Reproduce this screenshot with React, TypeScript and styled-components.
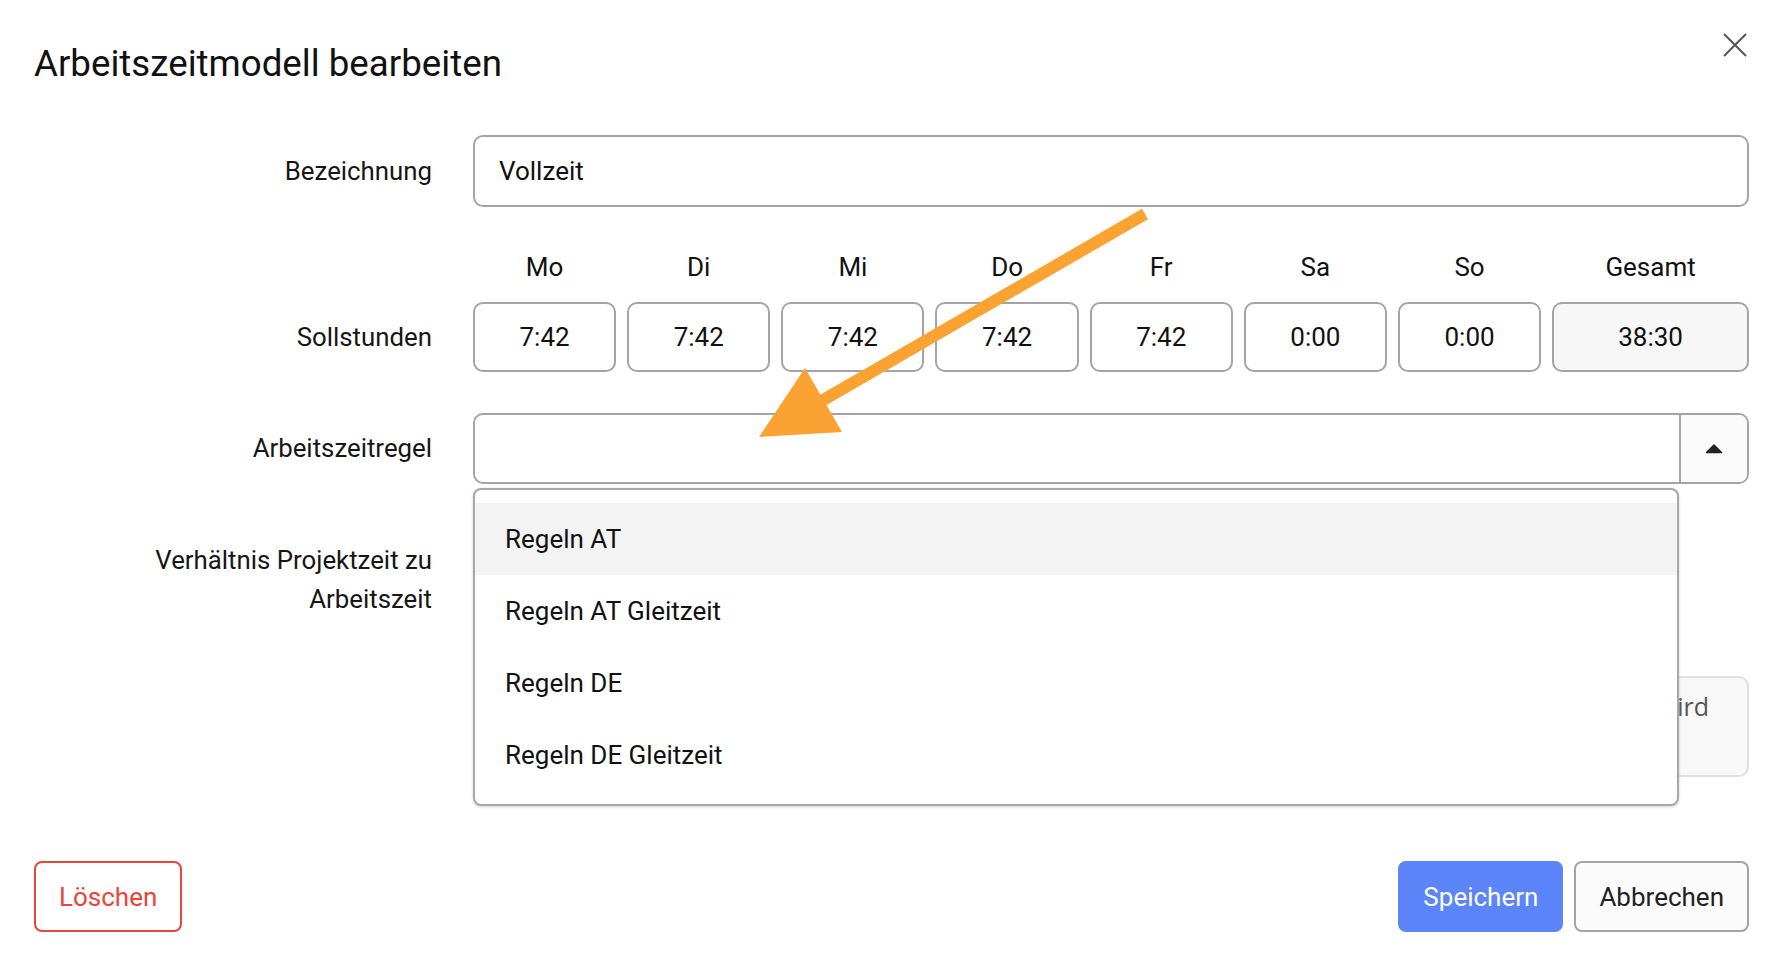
import React from 'react';
import styled, { createGlobalStyle } from 'styled-components';

const GlobalStyle = createGlobalStyle`
  html, body {
    margin: 0;
    padding: 0;
    background: #fff;
  }
  body {
    font-family: Roboto, "Liberation Sans", sans-serif;
    color: #161616;
  }
  * {
    box-sizing: border-box;
  }
`;

const Page = styled.div`
  position: relative;
  width: 1780px;
  height: 964px;
  padding: 0 31px 32px 34px;
  display: flex;
  flex-direction: column;
  overflow: hidden;
`;

const Header = styled.header`
  display: flex;
  justify-content: space-between;
  align-items: flex-start;
`;

const Title = styled.h1`
  margin: 43px 0 0;
  font-size: 36.7px;
  line-height: 42px;
  font-weight: 400;
  color: #111;
`;

const CloseButton = styled.button`
  display: flex;
  width: 24px;
  height: 24px;
  margin: 33px 2px 0 0;
  padding: 0;
  border: 0;
  background: none;
  cursor: pointer;
`;

const Row = styled.div<{ $top: number; $align?: string }>`
  display: grid;
  grid-template-columns: 398px 1fr;
  column-gap: 41px;
  align-items: ${(p) => p.$align || 'center'};
  margin-top: ${(p) => p.$top}px;
`;

const Label = styled.label`
  font-size: 25.8px;
  line-height: 39px;
  text-align: right;
  color: #161616;
`;

const TextInput = styled.input`
  width: 100%;
  height: 72px;
  padding: 0 24px;
  border: 2px solid #a4a4a4;
  border-radius: 10px;
  font: inherit;
  font-size: 26px;
  color: #111;
  background: #fff;
  outline: none;
`;

const DayGrid = styled.div`
  display: grid;
  grid-template-columns: repeat(7, 1fr) 1.375fr;
  column-gap: 11px;
`;

const DayHead = styled.div`
  font-size: 26px;
  line-height: 30px;
  text-align: center;
  color: #111;
`;

const HourBox = styled.div<{ $total?: boolean }>`
  height: 70px;
  display: flex;
  align-items: center;
  justify-content: center;
  border: 2px solid #a4a4a4;
  border-radius: 10px;
  font-size: 26px;
  color: #111;
  background: ${(p) => (p.$total ? '#f7f7f7' : '#fff')};
`;

const SelectWrap = styled.div`
  position: relative;
`;

const SelectBox = styled.div`
  display: flex;
  height: 71px;
  border: 2px solid #a4a4a4;
  border-radius: 10px;
  background: #fff;
`;

const SelectValue = styled.div`
  flex: 1;
`;

const SelectToggle = styled.div`
  width: 68px;
  display: flex;
  align-items: center;
  justify-content: center;
  border-left: 2px solid #a4a4a4;
  border-radius: 0 8px 8px 0;
  background: #fafafa;
`;

const Menu = styled.ul`
  position: absolute;
  top: calc(100% + 4px);
  left: 0;
  right: 70px;
  z-index: 5;
  margin: 0;
  padding: 13px 0;
  list-style: none;
  border: 2px solid #a8a8a8;
  border-radius: 8px;
  background: #fff;
  box-shadow: 0 1px 3px rgba(0, 0, 0, 0.18);
`;

const MenuItem = styled.li<{ $active?: boolean }>`
  height: 72px;
  display: flex;
  align-items: center;
  padding-left: 30px;
  font-size: 26px;
  color: #111;
  background: ${(p) => (p.$active ? '#f3f3f3' : 'transparent')};
`;

const HelpBox = styled.div`
  height: 101px;
  margin-top: 135px;
  padding: 10px 38px 0 24px;
  border: 2px solid #e0e0e0;
  border-radius: 10px;
  background: #f8f8f8;
  overflow: hidden;
`;

const HelpLine = styled.div`
  display: flex;
  justify-content: flex-end;
  white-space: nowrap;
  font-family: "Open Sans", "Liberation Sans", sans-serif;
  font-size: 25px;
  line-height: 36px;
  color: #555;
`;

const Footer = styled.footer`
  display: flex;
  align-items: center;
  margin-top: auto;
`;

const Actions = styled.div`
  display: flex;
  gap: 11px;
  margin-left: auto;
`;

const Button = styled.button<{ $view: 'danger' | 'primary' | 'default' }>`
  height: 71px;
  padding: 0 23px;
  border-radius: 8px;
  font-family: inherit;
  font-size: 26px;
  cursor: pointer;
  border: 2px solid
    ${(p) => (p.$view === 'danger' ? '#e9453a' : p.$view === 'primary' ? '#5b85f8' : '#a4a4a4')};
  color: ${(p) => (p.$view === 'danger' ? '#e9453a' : p.$view === 'primary' ? '#fff' : '#222')};
  background: ${(p) => (p.$view === 'danger' ? '#fff' : p.$view === 'primary' ? '#5b85f8' : '#fbfbfb')};
`;

const Annotation = styled.svg`
  position: absolute;
  top: 0;
  left: 0;
  z-index: 20;
  pointer-events: none;
`;

const days = [
  { day: 'Mo', hours: '7:42' },
  { day: 'Di', hours: '7:42' },
  { day: 'Mi', hours: '7:42' },
  { day: 'Do', hours: '7:42' },
  { day: 'Fr', hours: '7:42' },
  { day: 'Sa', hours: '0:00' },
  { day: 'So', hours: '0:00' },
];

const rules = ['Regeln AT', 'Regeln AT Gleitzeit', 'Regeln DE', 'Regeln DE Gleitzeit'];

function App(): JSX.Element {
  return (
    <>
      <GlobalStyle />
      <Page>
        <Header>
          <Title>Arbeitszeitmodell bearbeiten</Title>
          <CloseButton aria-label="Schließen">
            <svg width="24" height="24" viewBox="0 0 24 24">
              <path d="M1 1 L23 23 M23 1 L1 23" stroke="#555" strokeWidth="2" fill="none" />
            </svg>
          </CloseButton>
        </Header>

        <Row $top={50}>
          <Label>Bezeichnung</Label>
          <TextInput defaultValue="Vollzeit" />
        </Row>

        <Row $top={45}>
          <span />
          <DayGrid>
            {days.map((d) => (
              <DayHead key={d.day}>{d.day}</DayHead>
            ))}
            <DayHead>Gesamt</DayHead>
          </DayGrid>
        </Row>

        <Row $top={20}>
          <Label>Sollstunden</Label>
          <DayGrid>
            {days.map((d) => (
              <HourBox key={d.day}>{d.hours}</HourBox>
            ))}
            <HourBox $total>38:30</HourBox>
          </DayGrid>
        </Row>

        <Row $top={41}>
          <Label>Arbeitszeitregel</Label>
          <SelectWrap>
            <SelectBox>
              <SelectValue />
              <SelectToggle>
                <svg width="18" height="11" viewBox="0 0 18 11">
                  <path d="M1.5 9.5 L9 2 L16.5 9.5 Z" fill="#222" stroke="#222" strokeWidth="1.5" strokeLinejoin="round" />
                </svg>
              </SelectToggle>
            </SelectBox>
            <Menu>
              {rules.map((r, i) => (
                <MenuItem key={r} $active={i === 0}>
                  {r}
                </MenuItem>
              ))}
            </Menu>
          </SelectWrap>
        </Row>

        <Row $top={57} $align="start">
          <Label>
            Verhältnis Projektzeit zu
            <br />
            Arbeitszeit
          </Label>
          <HelpBox>
            <HelpLine>Legt fest, welcher Anteil der Arbeitszeit als Projektzeit erwartet wird</HelpLine>
          </HelpBox>
        </Row>

        <Footer>
          <Button $view="danger">Löschen</Button>
          <Actions>
            <Button $view="primary">Speichern</Button>
            <Button $view="default">Abbrechen</Button>
          </Actions>
        </Footer>

        <Annotation width="1780" height="964" viewBox="0 0 1780 964">
          <line x1="1145" y1="214" x2="818" y2="403" stroke="#faa332" strokeWidth="12" />
          <polygon points="759,437 805,368 842,432" fill="#faa332" />
        </Annotation>
      </Page>
    </>
  );
}

export default App;
